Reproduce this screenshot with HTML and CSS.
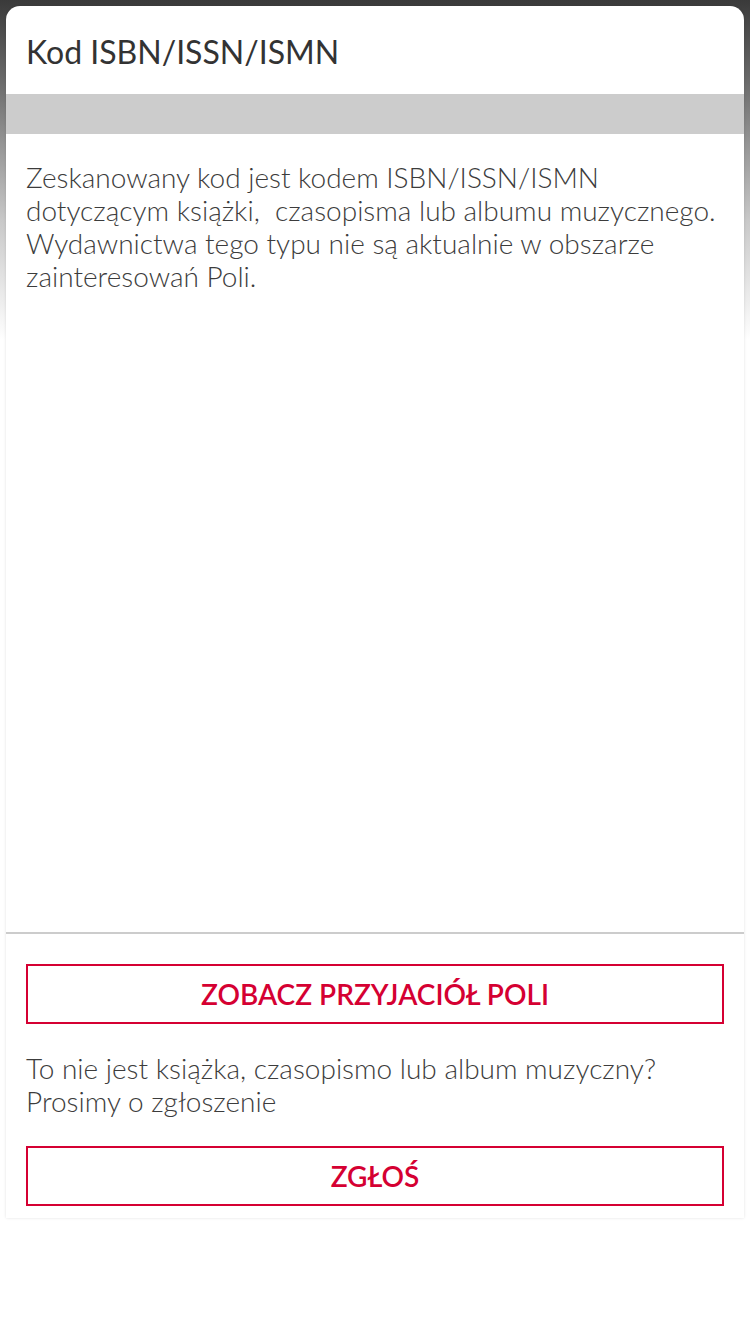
FILE: index.html
```html
<!DOCTYPE html>
<html lang="pl">
<head>
<meta charset="utf-8">
<title>Kod ISBN/ISSN/ISMN</title>
<link rel="stylesheet" href="styles.css">
</head>
<body>
<div class="screen">
  <div class="card">
    <div class="header">
      <h1 class="title">Kod ISBN/ISSN/ISMN</h1>
    </div>
    <div class="graybar"></div>
    <div class="content">
      <p class="desc">Zeskanowany kod jest kodem ISBN/ISSN/ISMN dotyczącym książki,&nbsp; czasopisma lub albumu muzycznego. Wydawnictwa tego typu nie są aktualnie w obszarze zainteresowań Poli.</p>
    </div>
    <div class="footer">
      <button class="btn">ZOBACZ PRZYJACIÓŁ POLI</button>
      <p class="note">To nie jest książka, czasopismo lub album muzyczny? Prosimy o zgłoszenie</p>
      <button class="btn">ZGŁOŚ</button>
    </div>
  </div>
</div>
</body>
</html>
```
FILE: styles.css
```css
html, body {
  margin: 0;
  padding: 0;
}
body {
  width: 750px;
  height: 1334px;
  overflow: hidden;
  background: #fff;
  font-family: Lato, "Open Sans", sans-serif;
}
.screen {
  height: 1334px;
  padding: 6px 6px 0;
  box-sizing: border-box;
  background: linear-gradient(to bottom, #3a3a3a 0px, #6a6a6a 80px, #c8c8c8 220px, #ffffff 340px, #ffffff 100%);
}
.card {
  background: #fff;
  border-radius: 14px 14px 0 0;
  height: 1212px;
  display: flex;
  flex-direction: column;
  box-shadow: 0 0 3px rgba(0,0,0,0.12);
}
.header {
  height: 88px;
  display: flex;
  align-items: center;
  padding: 0 20px;
  box-sizing: border-box;
}
.title {
  margin: 0;
  font-size: 32px;
  font-weight: 400;
  color: #333;
  padding-top: 2px;
}
.graybar {
  height: 40px;
  background: #cccccc;
}
.content {
  flex: 1;
  padding: 27px 8px 0 20px;
}
.desc {
  margin: 0;
  font-size: 28px;
  line-height: 33px;
  font-weight: 300;
  color: #3c3c3c;
}
.footer {
  border-top: 2px solid #cccccc;
  padding: 30px 20px 12px;
  display: flex;
  flex-direction: column;
}
.btn {
  height: 60px;
  border: 2px solid #d50032;
  background: #fff;
  color: #d50032;
  font-family: Lato, "Open Sans", sans-serif;
  font-size: 28px;
  font-weight: 600;
  padding: 0;
  width: 100%;
}
.note {
  margin: 28px 0 28px;
  font-size: 28px;
  line-height: 33px;
  font-weight: 300;
  color: #3c3c3c;
}
```
